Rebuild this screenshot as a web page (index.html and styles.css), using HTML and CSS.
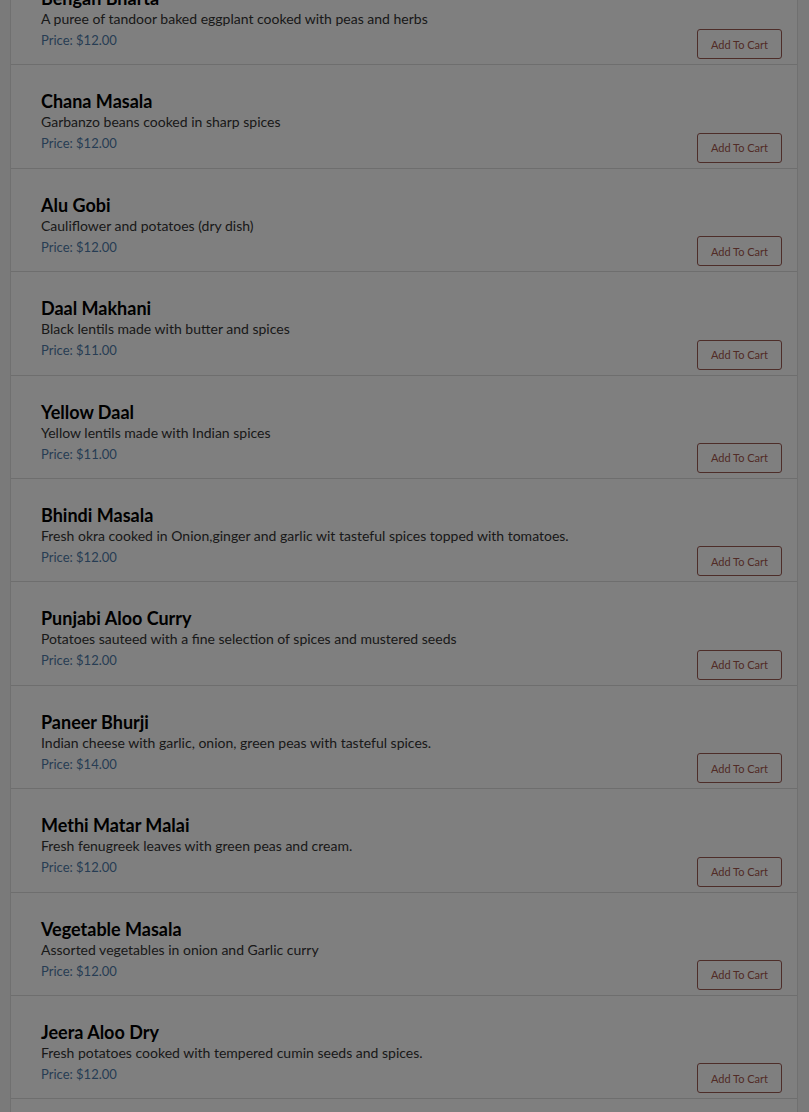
FILE: index.html
```html
<!DOCTYPE html>
<html>
<head>
<meta charset="utf-8">
<link rel="stylesheet" href="styles.css">
</head>
<body>
<div class="page">
  <ul class="menu">
    <li class="item"><div class="info"><h3 class="name">Bengan Bharta</h3><p class="desc">A puree of tandoor baked eggplant cooked with peas and herbs</p><p class="price">Price: $12.00</p></div><button class="cart">Add To Cart</button></li>
    <li class="item"><div class="info"><h3 class="name">Chana Masala</h3><p class="desc">Garbanzo beans cooked in sharp spices</p><p class="price">Price: $12.00</p></div><button class="cart">Add To Cart</button></li>
    <li class="item"><div class="info"><h3 class="name">Alu Gobi</h3><p class="desc">Cauliflower and potatoes (dry dish)</p><p class="price">Price: $12.00</p></div><button class="cart">Add To Cart</button></li>
    <li class="item"><div class="info"><h3 class="name">Daal Makhani</h3><p class="desc">Black lentils made with butter and spices</p><p class="price">Price: $11.00</p></div><button class="cart">Add To Cart</button></li>
    <li class="item"><div class="info"><h3 class="name">Yellow Daal</h3><p class="desc">Yellow lentils made with Indian spices</p><p class="price">Price: $11.00</p></div><button class="cart">Add To Cart</button></li>
    <li class="item"><div class="info"><h3 class="name">Bhindi Masala</h3><p class="desc">Fresh okra cooked in Onion,ginger and garlic wit tasteful spices topped with tomatoes.</p><p class="price">Price: $12.00</p></div><button class="cart">Add To Cart</button></li>
    <li class="item"><div class="info"><h3 class="name">Punjabi Aloo Curry</h3><p class="desc">Potatoes sauteed with a fine selection of spices and mustered seeds</p><p class="price">Price: $12.00</p></div><button class="cart">Add To Cart</button></li>
    <li class="item"><div class="info"><h3 class="name">Paneer Bhurji</h3><p class="desc">Indian cheese with garlic, onion, green peas with tasteful spices.</p><p class="price">Price: $14.00</p></div><button class="cart">Add To Cart</button></li>
    <li class="item"><div class="info"><h3 class="name">Methi Matar Malai</h3><p class="desc">Fresh fenugreek leaves with green peas and cream.</p><p class="price">Price: $12.00</p></div><button class="cart">Add To Cart</button></li>
    <li class="item"><div class="info"><h3 class="name">Vegetable Masala</h3><p class="desc">Assorted vegetables in onion and Garlic curry</p><p class="price">Price: $12.00</p></div><button class="cart">Add To Cart</button></li>
    <li class="item"><div class="info"><h3 class="name">Jeera Aloo Dry</h3><p class="desc">Fresh potatoes cooked with tempered cumin seeds and spices.</p><p class="price">Price: $12.00</p></div><button class="cart">Add To Cart</button></li>
    <li class="item"><div class="info"><h3 class="name">Aloo Mutter</h3><p class="desc">Potatoes and green peas cooked in curry sauce.</p><p class="price">Price: $12.00</p></div><button class="cart">Add To Cart</button></li>
  </ul>
</div>
<div class="backdrop"></div>
</body>
</html>
```
FILE: styles.css
```css
html, body {
  margin: 0;
  padding: 0;
  background: #f4f4f4;
  font-family: Lato, "Liberation Sans", sans-serif;
  overflow: hidden;
}
.page {
  padding: 0 11px 0 10px;
  margin-top: -38px;
}
.menu {
  list-style: none;
  margin: 0;
  padding: 0;
  background: #fff;
  border-left: 1px solid #e0e0e0;
  border-right: 1px solid #e0e0e0;
}
.item {
  display: flex;
  justify-content: space-between;
  align-items: flex-end;
  height: 103.4px;
  box-sizing: border-box;
  padding: 0 15px 5px 30px;
  border-bottom: 1px solid #dcdcdc;
}
.info {
  align-self: flex-start;
  padding-top: 25px;
}
.name {
  margin: 0;
  font-size: 18px;
  font-weight: 700;
  line-height: 22px;
  color: #000;
}
.desc {
  margin: 0;
  font-size: 14px;
  line-height: 20px;
  color: #333;
}
.price {
  margin: 0;
  font-size: 13px;
  line-height: 22px;
  color: #4f7ba8;
}
.cart {
  font-family: inherit;
  font-size: 11px;
  color: #a3564c;
  background: transparent;
  border: 1px solid #9b5a52;
  border-radius: 3px;
  width: 85px;
  height: 30px;
  padding: 0;
  cursor: pointer;
}
.backdrop {
  position: fixed;
  inset: 0;
  background: rgba(0, 0, 0, 0.5);
}
```
